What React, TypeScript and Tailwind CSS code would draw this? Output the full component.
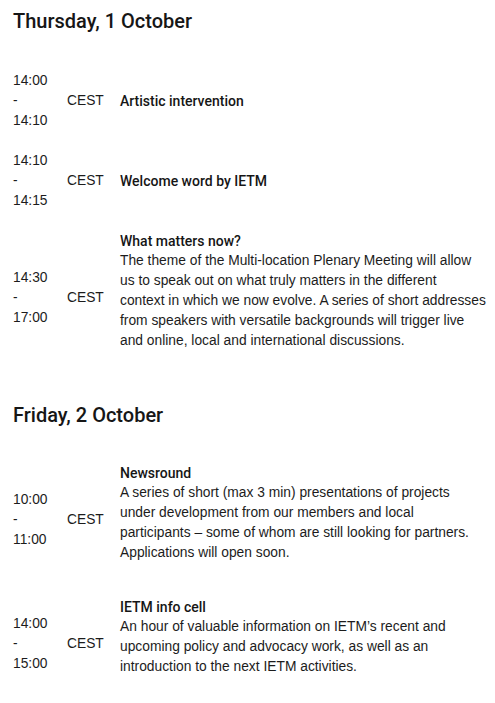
import React from "react";

type Row = {
  start: string;
  end: string;
  title: string;
  body?: string[];
};

const days: { heading: string; rows: Row[] }[] = [
  {
    heading: "Thursday, 1 October",
    rows: [
      { start: "14:00", end: "14:10", title: "Artistic intervention" },
      { start: "14:10", end: "14:15", title: "Welcome word by IETM" },
      {
        start: "14:30",
        end: "17:00",
        title: "What matters now?",
        body: [
          "The theme of the Multi-location Plenary Meeting will allow",
          "us to speak out on what truly matters in the different",
          "context in which we now evolve. A series of short addresses",
          "from speakers with versatile backgrounds will trigger live",
          "and online, local and international discussions.",
        ],
      },
    ],
  },
  {
    heading: "Friday, 2 October",
    rows: [
      {
        start: "10:00",
        end: "11:00",
        title: "Newsround",
        body: [
          "A series of short (max 3 min) presentations of projects",
          "under development from our members and local",
          "participants \u2013 some of whom are still looking for partners.",
          "Applications will open soon.",
        ],
      },
      {
        start: "14:00",
        end: "15:00",
        title: "IETM info cell",
        body: [
          "An hour of valuable information on IETM\u2019s recent and",
          "upcoming policy and advocacy work, as well as an",
          "introduction to the next IETM activities.",
        ],
      },
    ],
  },
];

function ScheduleRow({ row }: { row: Row }) {
  return (
    <div className="grid grid-cols-[54px_53px_1fr] items-center py-[10px] text-[13.8px] leading-[20px]">
      <div className="flex flex-col">
        <span>{row.start}</span>
        <span>-</span>
        <span>{row.end}</span>
      </div>
      <div>CEST</div>
      <div>
        <div className="font-medium font-['Roboto',sans-serif] text-[14px] text-[#161616]">
          {row.title}
        </div>
        {row.body && (
          <p className="mb-[14px]">
            {row.body.map((l, i) => (
              <span key={i} className="block whitespace-nowrap">
                {l}
              </span>
            ))}
          </p>
        )}
      </div>
    </div>
  );
}

export default function App() {
  return (
    <div className="min-h-screen bg-white pl-[13px] pt-[1px] text-[#1c1c1c] font-['Liberation_Sans',Arial,sans-serif]">
      {days.map((d, i) => (
        <section key={i} className={i > 0 ? "mt-[20px]" : ""}>
          <h2 className="text-[20px] font-medium leading-[40px] text-[#161616] font-['Roboto',sans-serif]">
            {d.heading}
          </h2>
          <div className={i > 0 ? "mt-[18px]" : "mt-[20px]"}>
            {d.rows.map((r, j) => (
              <ScheduleRow key={j} row={r} />
            ))}
          </div>
        </section>
      ))}
    </div>
  );
}
